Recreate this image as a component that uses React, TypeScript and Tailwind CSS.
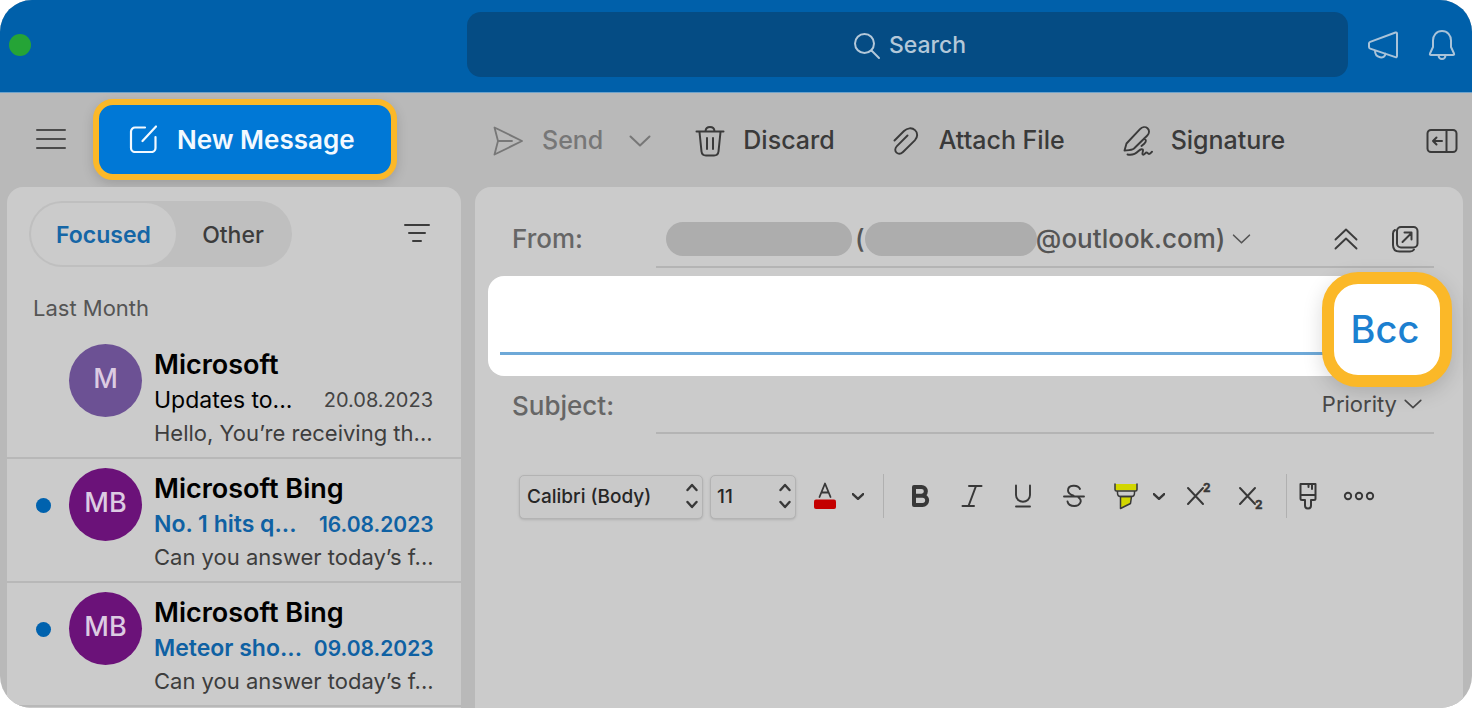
import type { ReactNode } from "react";

type Mail = {
  initials: string;
  sender: string;
  subject: string;
  date: string;
  preview: string;
  unread: boolean;
  avatar: string;
};

const mails: Mail[] = [
  { initials: "M", sender: "Microsoft", subject: "Updates to...", date: "20.08.2023", preview: "Hello, You’re receiving th...", unread: false, avatar: "bg-[#6c5194]" },
  { initials: "MB", sender: "Microsoft Bing", subject: "No. 1 hits q...", date: "16.08.2023", preview: "Can you answer today’s f...", unread: true, avatar: "bg-[#6b1279]" },
  { initials: "MB", sender: "Microsoft Bing", subject: "Meteor sho...", date: "09.08.2023", preview: "Can you answer today’s f...", unread: true, avatar: "bg-[#6b1279]" },
];

function Icon({ box, className, width = 2, children }: { box: string; className: string; width?: number; children: ReactNode }) {
  return (
    <svg viewBox={box} className={className} fill="none" stroke="currentColor" strokeWidth={width} strokeLinecap="round" strokeLinejoin="round" aria-hidden="true">
      {children}
    </svg>
  );
}

function Chevron({ className, width = 2 }: { className: string; width?: number }) {
  return (
    <Icon box="0 0 22 12" className={className} width={width}>
      <path d="M1.5 1.5 11 10.5 20.5 1.5" />
    </Icon>
  );
}

function Stepper() {
  return (
    <Icon box="0 0 12 26" className="pointer-events-none absolute right-[5px] top-[9px] h-[26px] w-3" width={2.4}>
      <path d="M1.5 7 6 2 10.5 7M1.5 19 6 24 10.5 19" />
    </Icon>
  );
}

function Header() {
  return (
    <header className="flex h-[93px] items-center border-b border-[#6fa3cb] bg-[#0060aa] pb-[3px] pl-[9px] pr-[16px] text-[#a9c3d9]">
      <button aria-label="Zoom window" className="size-[22px] shrink-0 rounded-full bg-[#25a436]" />
      <button className="ml-[436px] flex h-[65px] flex-1 items-center justify-center gap-2 rounded-[14px] bg-[#054c84] pl-1 pt-[2px] text-[23px] font-medium text-[#b4c8d9]">
        <Icon box="0 0 28 28" className="size-7">
          <circle cx="11.5" cy="11.5" r="9.5" />
          <path d="m18.5 18.5 7.5 7.5" />
        </Icon>
        Search
      </button>
      <button aria-label="Announcements" className="ml-[19px]">
        <Icon box="0 0 32 28" className="h-7 w-8">
          <path d="M28.500 1.500c.8-.3 1.500.1 1.500 1v22.500c0 1-.7 1.400-1.600 1.100L3.200 17.600C2.300 17.300 2 16.800 2 16v-3.500c0-.8.4-1.300 1.200-1.600zM8 19.500c0 8 10 9 10.500 3.200" />
        </Icon>
      </button>
      <button aria-label="Notifications" className="ml-[29px]">
        <Icon box="0 0 28 32" className="h-8 w-7">
          <path d="M14 2C8.500 2 5 6.300 5 11.500V18L2 24.500c-.4 1 .1 1.500 1 1.500h22c.9 0 1.400-.5 1-1.500L23 18v-6.500C23 6.300 19.500 2 14 2ZM10.500 26.500c.5 4.700 6.500 4.700 7 0" />
        </Icon>
      </button>
    </header>
  );
}

function MailRow({ mail }: { mail: Mail }) {
  return (
    <li className="flex h-[124px] border-b-2 border-[#b8b8b8] pl-[29px] pr-7 pt-[9px]">
      <span className="flex h-[74px] w-[33px] shrink-0 items-center">
        {mail.unread && <span className="size-[15px] rounded-full bg-[#0062ae]" />}
      </span>
      <span className={`flex size-[73px] shrink-0 items-center justify-center rounded-full pb-[2px] text-[27px] font-medium text-[#dccbe2] ${mail.avatar}`}>{mail.initials}</span>
      <a href="#message" className="ml-3 mt-1 block flex-1 whitespace-nowrap">
        <span className="block text-[27px] font-semibold leading-[34px] text-black">{mail.sender}</span>
        <span className="flex items-center justify-between leading-[37px]">
          <span className={mail.unread ? "text-[23px] font-semibold text-[#0f61a3]" : "text-[23px] text-black"}>{mail.subject}</span>
          <span className={mail.unread ? "text-[21px] font-semibold text-[#0f61a3]" : "text-[20px] text-[#444]"}>{mail.date}</span>
        </span>
        <span className="block text-[22px] leading-7 text-[#3d3d3d]">{mail.preview}</span>
      </a>
    </li>
  );
}

function Sidebar() {
  return (
    <aside className="flex w-[454px] shrink-0 flex-col">
      <div className="flex h-[94px] items-center pl-[29px] pb-[2px]">
        <button aria-label="Menu" className="text-[#4b4b4b]">
          <Icon box="0 0 30 22" className="h-[22px] w-[30px]">
            <path d="M1 2h28M1 11h28M1 20h28" />
          </Icon>
        </button>
        <button className="ml-[27px] flex h-[81px] w-[304px] items-center rounded-[20px] border-[6px] border-[#fbb828] bg-[#0078d6] pl-[30px] text-[26px] font-semibold text-[#f2f9ff] shadow-[0_4px_12px_rgba(0,0,0,0.15)]">
          <Icon box="0 0 28 28" className="mr-5 size-7" width={2.2}>
            <path d="M16 2.500H6A4 4 0 0 0 2 6.500V23A4 4 0 0 0 6 27H22.500A4 4 0 0 0 26.500 23V12M27 1.500 13.500 16" />
          </Icon>
          New Message
        </button>
      </div>
      <section className="flex-1 rounded-t-2xl bg-[#cbcbcb] pb-px">
        <div className="flex items-start justify-between pl-[22px] pr-[31px] pt-[14px]">
          <div className="flex h-[66px] rounded-full bg-[#bfbfbf] p-[2px] text-[23px]">
            <button className="w-[145px] rounded-full bg-[#cbcbcb] pt-[3px] font-semibold text-[#1566a6]">Focused</button>
            <button className="w-[114px] pt-[3px] font-medium text-[#3c3c3c]">Other</button>
          </div>
          <button aria-label="Filter" className="mt-[22px] text-[#3c3c3c]">
            <Icon box="0 0 26 20" className="h-5 w-[26px]">
              <path d="M1 2h24M5 10h16M9 18h8" />
            </Icon>
          </button>
        </div>
        <h2 className="mt-[25px] pl-[26px] text-[22px] leading-8 text-[#555]">Last Month</h2>
        <ul className="mt-[11px]">
          {mails.map((mail) => (
            <MailRow key={mail.date} mail={mail} />
          ))}
        </ul>
      </section>
    </aside>
  );
}

function ActionBar() {
  return (
    <div className="flex h-[94px] items-center pl-[17px] pr-[5px] pt-[2px] text-[25px] font-medium text-[#3a3a3a]">
      <button className="flex items-center gap-[18px] text-[#777]">
        <Icon box="0 0 32 32" className="size-8" width={1.8}>
          <path d="M2.500 2.500 30 16 2.500 29.500 6 16ZM6 16h14" />
        </Icon>
        Send
      </button>
      <button aria-label="Send options" className="ml-[26px] text-[#777]">
        <Chevron className="h-3 w-[22px]" />
      </button>
      <button className="ml-[44px] flex items-center gap-[18px]">
        <Icon box="0 0 30 32" className="h-8 w-[30px]">
          <path d="M1.500 6.500h27M10.500 6C11 .5 19 .5 19.500 6M4.500 7l2 19.500C6.800 29 8.500 30.500 11 30.500h8c2.500 0 4.200-1.500 4.500-4L25.500 7M12 13v11M18 13v11" />
        </Icon>
        Discard
      </button>
      <button className="ml-[58px] flex items-center gap-[20px]">
        <Icon box="0 0 26 28" className="h-7 w-[26px]" width={1.9}>
          <path d="M1.500 13.500 11 4c3.200-3.200 8-3.600 11-.9s2.800 7.200-.2 10.300L10 25c-2 1.900-4.700 2.200-6.500.6s-1.600-4.500.4-6.500L14.500 8.500" />
        </Icon>
        Attach File
      </button>
      <button className="ml-[58px] flex items-center gap-[18px]">
        <Icon box="0 0 30 32" className="h-8 w-[30px]" width={1.900}>
          <path d="M1.500 25.500 3.500 18.500 17 4.200c2.200-2.400 5.400-2.800 7.500-1s2 5.100-.2 7.300L11 23.500C8.500 25.500 5 25.200 1.500 25.500ZM21 13.500c2.500 1.200 2.500 3.200.2 5.200L18.500 21M4.500 29.500c4.500 1 8-.5 11-3.500 2.200-2.200 4.800-2.500 4.500-.3-.2 1.600-1.300 3.600 0 4 1.500.4 2.200-2.200 3.500-2.200 1.200 0 1.200 1.500 2.500 1.500s2-1 3-2.300" />
        </Icon>
        Signature
      </button>
      <button aria-label="Toggle side pane" className="ml-auto">
        <Icon box="0 0 32 26" className="h-[26px] w-8">
          <rect x="1.500" y="2" width="29" height="22" rx="3.500" />
          <path d="M20.500 2v22M16 13H7M10.500 9.500 7 13l3.500 3.500" />
        </Icon>
      </button>
    </div>
  );
}

function FormatBar() {
  return (
    <div className="ml-[44px] mt-10 flex h-11 items-center text-[#383838]">
      <div className="relative h-11 w-[184px]">
        <select aria-label="Font" className="h-full w-full appearance-none rounded-[5px] border border-[#b3b3b3] bg-[#c9c9c9] pl-[7px] text-[19px] font-medium text-[#262626] shadow-sm">
          <option>Calibri (Body)</option>
        </select>
        <Stepper />
      </div>
      <div className="relative ml-[7px] h-11 w-[86px]">
        <select aria-label="Font size" className="h-full w-full appearance-none rounded-[5px] border border-[#b3b3b3] bg-[#c9c9c9] pl-[6px] text-[19px] font-medium text-[#262626] shadow-sm">
          <option>11</option>
        </select>
        <Stepper />
      </div>
      <button aria-label="Font color" className="ml-[17px]">
        <Icon box="0 0 24 28" className="h-7 w-6" width={1.8}>
          <path d="m6.500 15 5.500-13.500L17.500 15M8.500 10.500h7" />
          <rect x="1" y="17.500" width="22" height="9.500" rx="2" fill="#c40000" stroke="none" />
        </Icon>
      </button>
      <button aria-label="Font color options" className="ml-[15px]">
        <Chevron className="h-[7px] w-3" width={4.5} />
      </button>
      <span className="ml-[19px] h-11 w-px bg-[#b0b0b0]" />
      <button aria-label="Bold" className="ml-[26px]">
        <Icon box="0 0 20 24" className="h-6 w-5" width={4}>
          <path d="M4 3h7.500a4.300 4.300 0 0 1 0 8.700H4ZM4 11.700h8.500a4.600 4.600 0 0 1 0 9.300H4Z" />
        </Icon>
      </button>
      <button aria-label="Italic" className="ml-[31px]">
        <Icon box="0 0 22 24" className="h-6 w-[22px]" width={2}>
          <path d="M8 2h12.500M1.500 22H13M15 2 7.500 22" />
        </Icon>
      </button>
      <button aria-label="Underline" className="ml-[31px]">
        <Icon box="0 0 18 24" className="h-6 w-[18px]" width={1.9}>
          <path d="M2 1.500V11c0 9 14 9 14 0V1.500M2 22.500h14" />
        </Icon>
      </button>
      <button aria-label="Strikethrough" className="ml-[31px]">
        <Icon box="0 0 22 24" className="h-6 w-[22px]" width={1.9}>
          <path d="M17 5C15 .5 5 .5 5 6.500c0 3.500 4 4.500 6 5.500M1 12.500h20M15.500 13.500C20 16.500 17 22 11.500 22c-4 0-6.500-2-7-4.500" />
        </Icon>
      </button>
      <button aria-label="Highlight" className="ml-[28px]">
        <Icon box="0 0 26 28" className="h-7 w-[26px]" width={1.5}>
          <path d="M2 2v6.500h22V2Z" fill="#d2d600" stroke="none" />
          <path d="M7.500 14.500V26.500L17.500 21.500 18.500 14.500Z" fill="#d2d600" />
          <path d="M2 2v5.500c0 1 .6 1.500 1.500 1.500h19c.9 0 1.500-.5 1.500-1.500V2M4.500 9.500v1.500c0 2.500 1 3.500 3 3.500h11c2 0 3-1 3-3.500V9.500" />
        </Icon>
      </button>
      <button aria-label="Highlight options" className="ml-[14px]">
        <Chevron className="h-[7px] w-3" width={4.5} />
      </button>
      <button aria-label="Superscript" className="ml-[21px]">
        <Icon box="0 0 26 30" className="h-[30px] w-[26px]">
          <path d="M2 7 17 23M17 7 2 23" />
          <text x="17" y="11" fontSize="12" fontWeight="700" fill="currentColor" stroke="currentColor" strokeWidth="0.4">2</text>
        </Icon>
      </button>
      <button aria-label="Subscript" className="ml-[26px]">
        <Icon box="0 0 26 30" className="h-[30px] w-[26px]">
          <path d="M2 7 17 23M17 7 2 23" />
          <text x="17" y="28" fontSize="12" fontWeight="700" fill="currentColor" stroke="currentColor" strokeWidth="0.4">2</text>
        </Icon>
      </button>
      <span className="ml-[22px] h-11 w-px bg-[#b0b0b0]" />
      <button aria-label="Format painter" className="ml-[12px]">
        <Icon box="0 0 18 28" className="h-7 w-[18px]">
          <path d="M1.500 2h15v14.500c0 1-.5 1.500-1.500 1.500h-3v5.500c0 4-6 4-6 0V18H3c-1 0-1.500-.5-1.500-1.500ZM1.500 13h15M9.500 2v3M13 2v5" />
        </Icon>
      </button>
      <button aria-label="More formatting" className="ml-[26px]">
        <Icon box="0 0 32 10" className="h-[10px] w-8" width={1.9}>
          <circle cx="5" cy="5" r="3.2" />
          <circle cx="16" cy="5" r="3.2" />
          <circle cx="27" cy="5" r="3.2" />
        </Icon>
      </button>
    </div>
  );
}

function Compose() {
  return (
    <main className="ml-[14px] mr-[9px] flex min-w-0 flex-1 flex-col">
      <ActionBar />
      <section className="flex-1 rounded-t-2xl bg-[#cbcbcb] text-[26px] font-medium text-[#666]">
        <div className="flex h-[81px] pl-[37px] pr-[29px]">
          <span className="w-[144px] shrink-0 pt-[22px] leading-[60px]">From:</span>
          <div className="flex flex-1 items-center border-b-2 border-[#b4b4b4] pl-[10px] pr-[15px] pt-[24px]">
            <button className="flex items-center text-[#555]">
              <span className="h-[34px] w-[186px] rounded-full bg-[#adadad]" />
              <span className="ml-[3px]">(</span>
              <span className="relative -mr-4 h-[34px] w-[172px] rounded-full bg-[#adadad]" />
              <span>e@outlook.com)</span>
              <Chevron className="ml-[7px] h-[10px] w-[19px]" />
            </button>
            <button aria-label="Collapse header" className="ml-auto text-[#3c3c3c]">
              <Icon box="0 0 24 24" className="size-6" width={1.9}>
                <path d="M1.500 12.500 12 2.500 22.500 12.500M1.500 21.500 12 11.500 22.500 21.500" />
              </Icon>
            </button>
            <button aria-label="Open in new window" className="ml-[33px] text-[#3c3c3c]">
              <Icon box="0 0 28 28" className="size-7">
                <rect x="6" y="2" width="20.500" height="20.500" rx="4" />
                <path d="M4 5C2.500 5.800 2 7 2 8.500V20c0 4 2.500 6.500 6.500 6.500H19c2 0 3.200-.7 4-2M11.500 17 20.500 8M13.500 7.500H20.500V14.500" />
              </Icon>
            </button>
          </div>
        </div>
        <div className="relative ml-[13px] mr-[29px] mt-2 h-[100px] rounded-2xl bg-white pl-3 pr-12">
          <input aria-label="To" className="h-[79px] w-full border-b-[3px] border-[#6ea9d8] bg-transparent outline-none" />
          <button className="absolute -right-[18px] -top-1 flex h-[115px] w-[130px] items-center justify-center rounded-[36px] border-[12px] border-[#fbb828] bg-white pr-1 text-[38px] text-[#1c80d0] shadow-[0_6px_20px_rgba(0,0,0,0.15)]">
            Bcc
          </button>
        </div>
        <div className="flex h-[58px] pl-[37px] pr-[29px]">
          <label htmlFor="subject" className="w-[144px] shrink-0 leading-[60px]">Subject:</label>
          <div className="flex flex-1 items-center border-b-2 border-[#b4b4b4] pr-3">
            <input id="subject" className="h-full min-w-0 flex-1 bg-transparent outline-none" />
            <button className="flex items-center gap-[7px] text-[22px] font-normal text-[#484848]">
              Priority
              <Chevron className="h-[10px] w-[18px]" />
            </button>
          </div>
        </div>
        <FormatBar />
      </section>
    </main>
  );
}

export default function App() {
  return (
    <div className="bg-white font-['Inter',sans-serif]">
      <div className="overflow-hidden rounded-[32px] bg-[#b9b9b9]">
        <Header />
        <div className="flex pl-[7px]">
          <Sidebar />
          <Compose />
        </div>
      </div>
    </div>
  );
}
